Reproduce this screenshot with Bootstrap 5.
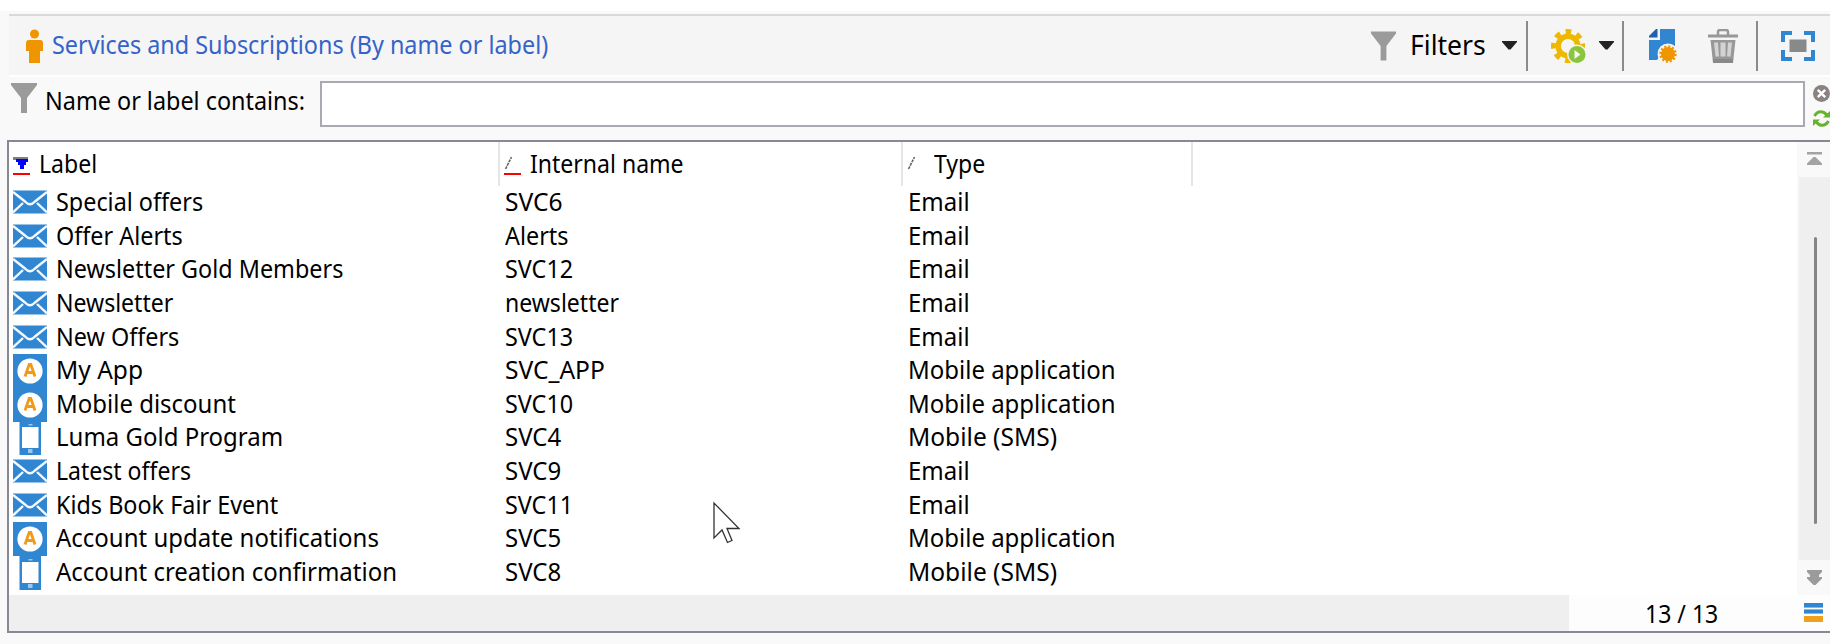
<!DOCTYPE html>
<html lang="en">
<head>
<meta charset="utf-8">
<title>Services and Subscriptions</title>
<link href="https://cdn.jsdelivr.net/npm/bootstrap@5.3.0/dist/css/bootstrap.min.css" rel="stylesheet">
<style>
body{height:644px;overflow:hidden;background:#f9f9f9;border-top:11px solid #fff;color:#000;font-family:"Noto Sans","Open Sans",sans-serif;font-size:24.5px;line-height:33px;white-space:nowrap}
svg{display:block;flex:none}
.tx{display:inline-block;transform:scaleX(.954);transform-origin:0 50%}
.tx.k94{transform:scaleX(.94)}
.tx.k98{transform:scaleX(.979)}
.tx.k100{transform:scaleX(1.002)}
.toolbar{margin:3px 0 0 9px;height:63px;border-top:2px solid #d9d9d9;border-bottom:2.5px solid #fff;background:#f5f5f5;padding-left:17px;padding-right:15px}
.heading{color:#3563c9;margin-left:9px;width:500px;padding-bottom:2px}
.filters{width:74px;margin:0 18px 0 14px;font-size:26.5px}
.sep{width:2px;height:50px;background:#8b8b8b}
.filterbar{height:63px;padding:4px 0 0 11px}
.inputbox{width:1485px;height:46px;border:2px solid #a9a9b1;border-radius:0;background:#fff;padding:0}
.panel{margin-left:7px;height:493px;border:2px solid #868993;border-right:0;background:#fff}
.gridrow{display:grid;grid-template-columns:491px 403px 290px 1fr}
.headrow{height:44px}
.headrow>div{height:44px;border-right:2px solid #e5e5e5;padding-left:4px;line-height:44px}
.headrow>div:last-child{border:0}
.itemrow{height:33.64px}
.itemrow>div{padding-left:5px;height:33.64px;line-height:31px}
.itemrow>div:first-child{padding-left:4px}
.itemrow svg+.tx{margin-left:9px}
.track{width:33px;background:linear-gradient(90deg,#f9f9f9 2px,#efefef 2px)}
.track .stepper{height:35px;background:#f9f9f9;padding-left:10px}
.thumb{width:3px;height:287px;margin:60px 0 0 17px;background:#858585;border-radius:2px}
.statusbar{height:36px;background:#efefef}
.counter{width:261px;background:#fdfdfd;padding-left:76px}
.pointer{position:absolute;left:712px;top:501px}
</style>
</head>
<body>
<svg width="0" height="0" class="position-absolute">
<symbol id="mail" viewBox="0 0 34 34"><path fill="#3186d2" d="M0 4.500h34v23H0z"/><path d="M0 6l12 9.500Q17 21 22 15.500L34 6M0 26.500l10-9.500M34 26.500L24 17" fill="none" stroke="#f3f9fe" stroke-width="2.400"/></symbol>
<symbol id="app" viewBox="0 0 34 34"><path fill="#3186d2" d="M0 0h34v34H0z"/><circle cx="17" cy="17" r="12.600" fill="#fff"/><path d="M12 22.500l4.200-12h1.600l4.200 12M13.500 18.500h7" fill="none" stroke="#f19a1a" stroke-width="2.800"/></symbol>
<symbol id="phone" viewBox="0 0 34 34"><path fill="#3186d2" d="M6.500 0h21.500v34H6.500z"/><path fill="#fff" d="M9 6h16.500v21H9z"/><path fill="#9cc6ec" d="M15.500 3h4v1.500h-4zM15 28h4.500v4H15z"/></symbol>
<symbol id="funnel" viewBox="0 0 26 30"><path fill="#9b9b9b" d="M0 0h26v2L16 15v15h-6V15L0 2z"/></symbol>
<symbol id="caret" viewBox="0 0 15 9"><path fill="#222" d="M0 0h15v1L8.500 8.500h-2L0 1z"/></symbol>
</svg>

<header class="toolbar d-flex align-items-center">
  <svg width="17" height="34" viewBox="0 0 17 34"><circle cx="8.500" cy="5" r="4.500" fill="#ee9500"/><path fill="#ee9500" d="M3 11h11q3 0 3 3v8h-3v12H3V22H0v-8q0-3 3-3z"/></svg>
  <div class="heading"><span class="tx">Services and Subscriptions (By name or label)</span></div>
  <div class="d-flex align-items-center ms-auto">
    <svg width="25" height="30"><use href="#funnel"/></svg>
    <div class="filters"><span class="tx k100">Filters</span></div>
    <svg width="15" height="9"><use href="#caret"/></svg>
    <div class="sep" style="margin:0 23px 0 9px"></div>
    <svg width="35" height="34" viewBox="0 0 35 34"><circle cx="17" cy="17" r="9.800" fill="none" stroke="#eeb800" stroke-width="5.500"/><circle cx="17" cy="17" r="14.300" fill="none" stroke="#eeb800" stroke-width="5.400" stroke-dasharray="5.600 5.630" stroke-dashoffset="2.800"/><circle cx="26" cy="25.500" r="10" fill="#f5f5f5"/><circle cx="26" cy="25.500" r="8.500" fill="#8ac53e"/><path d="M23.500 21l6 4.500-6 4.500z" fill="#f5f5f5"/><circle cx="33" cy="15.500" r="1.200" fill="#eeb800"/><circle cx="16" cy="32.500" r="1.200" fill="#eeb800"/></svg>
    <svg width="15" height="9" style="margin-left:13px"><use href="#caret"/></svg>
    <div class="sep" style="margin:0 25px 0 8px"></div>
    <svg width="28" height="34" viewBox="0 0 28 34"><path fill="#3186d2" d="M11 0h15v17H18L8 31H0V11h11z"/><path fill="#2062ac" d="M8.500 0v8.500H0V7L7 0z"/><circle cx="19" cy="25" r="10.500" fill="#f5f5f5"/><circle cx="19" cy="25" r="7" fill="#ee9500"/><circle cx="19" cy="25" r="7.500" fill="none" stroke="#ee9500" stroke-width="2.500" stroke-dasharray="2 1.927"/></svg>
    <svg width="30" height="34" viewBox="0 0 30 34" style="margin:0 18px 0 31px"><path fill="none" stroke="#989898" stroke-width="2.500" d="M10 6V3q0-2 2-2h6q2 0 2 2v3"/><path fill="#989898" d="M0 5.500h30v3H0zM2.500 11h25L25 34H5z"/><path fill="#d3d3d3" d="M6 13.500h4l1 14H7.500zM12.500 13.500h5v14h-5zM20 13.500h4l-1.500 14H19z"/><path fill="#898989" d="M5 30h20v4H5z"/></svg>
    <div class="sep" style="margin-right:23px"></div>
    <svg width="34" height="30" viewBox="0 0 34 30"><path fill="none" stroke="#3186d2" stroke-width="4" d="M11 2H2v9M23 2h9v9M2 19v9h9M32 19v9h-9"/><path fill="#898989" d="M8.500 8.500h17v12.500h-17z"/></svg>
  </div>
</header>

<div class="filterbar d-flex">
  <svg width="26" height="30" style="margin-top:2px"><use href="#funnel"/></svg>
  <div style="width:275px;margin-left:8px;padding-top:3px"><span class="tx">Name or label contains:</span></div>
  <input class="inputbox" type="text" aria-label="Name or label contains">
  <div class="d-flex flex-column" style="gap:8px;margin:4px 0 0 8px">
    <svg width="17" height="17" viewBox="0 0 17 17"><circle cx="8.500" cy="8.500" r="8.500" fill="#898280"/><path d="M4.800 4.800l7.400 7.400M12.200 4.800l-7.400 7.400" stroke="#fff" stroke-width="2.400"/></svg>
    <svg width="17" height="17" viewBox="0 0 17 17"><path d="M1.500 6Q5 0 11 2.500l3 2.500M15.500 11Q12 17 6 14.500L3 12" fill="none" stroke="#68b22f" stroke-width="3"/><path fill="#68b22f" d="M17 1v6.500h-7zM0 16V9.500h7z"/></svg>
  </div>
</div>

<main class="panel d-flex flex-column">
  <div class="d-flex flex-grow-1">
    <div class="flex-grow-1">
      <div class="gridrow headrow">
        <div class="d-flex"><svg width="17" height="44" style="margin-right:9px"><path fill="#808080" d="M0 15h15v3H0z"/><path fill="#00f" d="M3 17h12v3h-2v3h-2v4H7v-4H5v-3H3z"/><path fill="red" d="M0 31h17v2H0z"/></svg><span class="tx k94">Label</span></div>
        <div class="d-flex"><svg width="17" height="44" style="margin-right:9px"><path d="M1.500 27l6-12" stroke="#666" stroke-width="1.600" stroke-dasharray="3 .8"/><path fill="red" d="M0 31h17v2H0z"/></svg><span class="tx k94">Internal name</span></div>
        <div class="d-flex"><svg width="17" height="44" style="margin-right:10px"><path d="M1.500 27l6-12" stroke="#666" stroke-width="1.600" stroke-dasharray="3 .8"/></svg><span class="tx k94">Type</span></div>
        <div></div>
      </div>
      <div class="gridrow itemrow"><div class="d-flex"><svg width="34" height="34"><use href="#mail"/></svg><span class="tx">Special offers</span></div><div><span class="tx k100">SVC6</span></div><div><span class="tx k98">Email</span></div></div>
      <div class="gridrow itemrow"><div class="d-flex"><svg width="34" height="34"><use href="#mail"/></svg><span class="tx">Offer Alerts</span></div><div><span class="tx">Alerts</span></div><div><span class="tx k98">Email</span></div></div>
      <div class="gridrow itemrow"><div class="d-flex"><svg width="34" height="34"><use href="#mail"/></svg><span class="tx">Newsletter Gold Members</span></div><div><span class="tx">SVC12</span></div><div><span class="tx k98">Email</span></div></div>
      <div class="gridrow itemrow"><div class="d-flex"><svg width="34" height="34"><use href="#mail"/></svg><span class="tx k94">Newsletter</span></div><div><span class="tx k94">newsletter</span></div><div><span class="tx k98">Email</span></div></div>
      <div class="gridrow itemrow"><div class="d-flex"><svg width="34" height="34"><use href="#mail"/></svg><span class="tx">New Offers</span></div><div><span class="tx">SVC13</span></div><div><span class="tx k98">Email</span></div></div>
      <div class="gridrow itemrow"><div class="d-flex"><svg width="34" height="34"><use href="#app"/></svg><span class="tx k100">My App</span></div><div><span class="tx k100">SVC_APP</span></div><div><span class="tx k98">Mobile application</span></div></div>
      <div class="gridrow itemrow"><div class="d-flex"><svg width="34" height="34"><use href="#app"/></svg><span class="tx k98">Mobile discount</span></div><div><span class="tx">SVC10</span></div><div><span class="tx k98">Mobile application</span></div></div>
      <div class="gridrow itemrow"><div class="d-flex"><svg width="34" height="34"><use href="#phone"/></svg><span class="tx k98">Luma Gold Program</span></div><div><span class="tx k98">SVC4</span></div><div><span class="tx k100">Mobile (SMS)</span></div></div>
      <div class="gridrow itemrow"><div class="d-flex"><svg width="34" height="34"><use href="#mail"/></svg><span class="tx k94">Latest offers</span></div><div><span class="tx k98">SVC9</span></div><div><span class="tx k98">Email</span></div></div>
      <div class="gridrow itemrow"><div class="d-flex"><svg width="34" height="34"><use href="#mail"/></svg><span class="tx">Kids Book Fair Event</span></div><div><span class="tx">SVC11</span></div><div><span class="tx k98">Email</span></div></div>
      <div class="gridrow itemrow"><div class="d-flex"><svg width="34" height="34"><use href="#app"/></svg><span class="tx k98">Account update notifications</span></div><div><span class="tx k98">SVC5</span></div><div><span class="tx k98">Mobile application</span></div></div>
      <div class="gridrow itemrow"><div class="d-flex"><svg width="34" height="34"><use href="#phone"/></svg><span class="tx k98">Account creation confirmation</span></div><div><span class="tx k98">SVC8</span></div><div><span class="tx k100">Mobile (SMS)</span></div></div>
    </div>
    <div class="track d-flex flex-column">
      <div class="stepper" style="padding-top:10px"><svg width="15" height="13"><path fill="#a3a3a3" d="M0 0h15v2.500H0zM6.500 5h2l6.500 6.500V13H0v-1.500z"/></svg></div>
      <div class="thumb"></div>
      <div class="stepper mt-auto" style="padding-top:10px"><svg width="15" height="15"><path fill="#9b9b9b" d="M0 0h15v2l-3 3v2h3v1.500L8.500 15h-2L0 8.500V7h3V5L0 2z"/></svg></div>
    </div>
  </div>
  <footer class="statusbar d-flex justify-content-end">
    <div class="counter d-flex align-items-center"><div style="width:159px"><span class="tx k94">13 / 13</span></div>
      <svg width="19" height="20"><path fill="#3186d2" d="M0 0h19v4H0zM0 7h19v3H0z"/><path fill="#83b8e9" d="M0 4h19v1H0zM0 6h19v1H0zM0 10h19v1H0z"/><path fill="#f0a01f" d="M0 13h19v6H0z"/></svg></div>
  </footer>
</main>
<svg class="pointer" width="30" height="44" viewBox="0 0 30 44"><path d="M2 2v35l8-8 5.500 12.500 4.500-2L15 27.500h12z" fill="#fff" stroke="#333" stroke-width="1.300"/></svg>
<script src="https://cdn.jsdelivr.net/npm/bootstrap@5.3.0/dist/js/bootstrap.bundle.min.js"></script>
</body>
</html>
